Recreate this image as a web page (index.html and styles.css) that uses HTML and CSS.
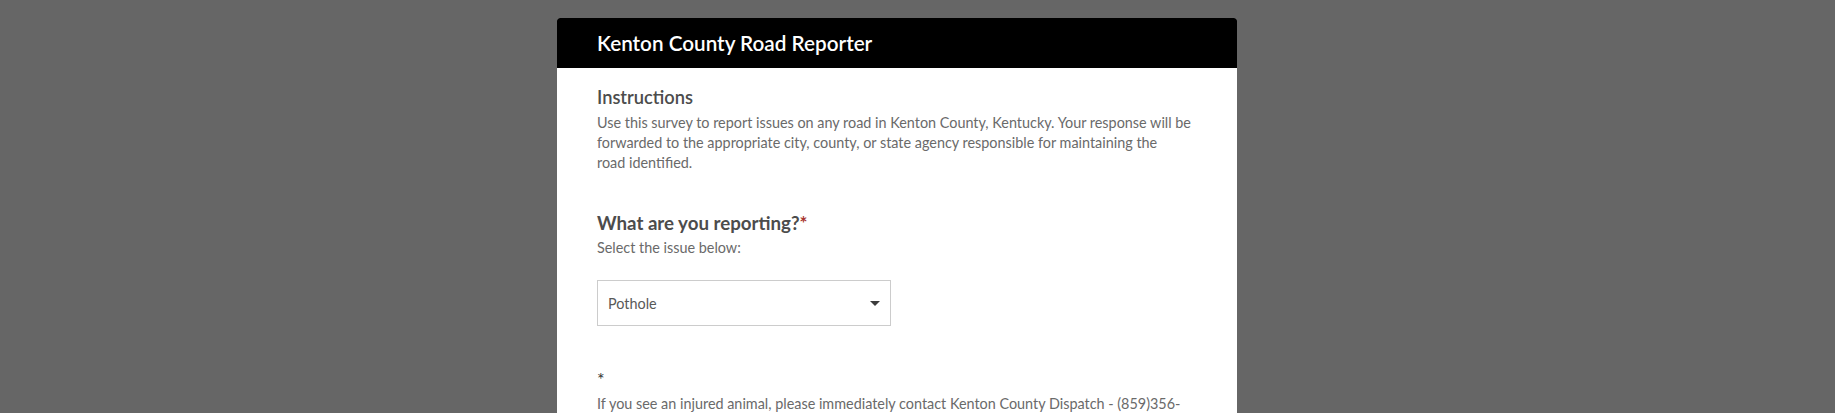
FILE: index.html
```html
<!DOCTYPE html>
<html>
<head>
<meta charset="utf-8">
<link rel="stylesheet" href="styles.css">
</head>
<body>
<div class="card">
  <div class="header"><h1 class="title">Kenton County Road Reporter</h1></div>
  <div class="content">
    <section class="instructions">
      <h2 class="instr-title">Instructions</h2>
      <p class="instr-text">Use this survey to report issues on any road in Kenton County, Kentucky. Your response will be forwarded to the appropriate city, county, or state agency responsible for maintaining the road&nbsp;identified.</p>
    </section>
    <section class="question">
      <h3 class="q-title">What are you reporting?<span class="req">*</span></h3>
      <p class="q-desc">Select the issue below:</p>
      <div class="select">
        <span class="select-value">Pothole</span>
        <span class="caret"></span>
      </div>
    </section>
    <section class="note">
      <div class="note-star">*</div>
      <p class="note-text">If you see an injured animal, please immediately contact Kenton County Dispatch - (859)356-3191.</p>
    </section>
  </div>
</div>
</body>
</html>
```
FILE: styles.css
```css
html, body {
  margin: 0;
  padding: 0;
  background: #666666;
  font-family: Lato, "Open Sans", sans-serif;
  height: 100%;
  overflow: hidden;
}
.card {
  width: 680px;
  margin: 18px 0 0 557px;
  background: #ffffff;
  border-radius: 3px 3px 0 0;
  min-height: 500px;
}
.header {
  height: 50px;
  background: #000;
  border-radius: 3px 3px 0 0;
  padding: 0 40px;
  display: flex;
  align-items: center;
}
.title {
  margin: 0;
  color: #fff;
  font-size: 20.7px;
  font-weight: 600;
}
.content {
  padding: 17px 40px 0 40px;
}
.instr-title {
  margin: 0;
  font-size: 18.3px;
  font-weight: 600;
  color: #4c4c4c;
  line-height: 24px;
}
.instr-text {
  margin: 4px 0 0 0;
  font-size: 14.4px;
  line-height: 20px;
  color: #6a6a6a;
  width: 600px;
}
.question {
  margin-top: 37px;
}
.q-title {
  margin: 0;
  font-size: 18.7px;
  font-weight: 700;
  color: #4c4c4c;
  line-height: 26px;
}
.req {
  color: #a8342e;
}
.q-desc {
  margin: 2px 0 0 0;
  font-size: 14.4px;
  line-height: 20px;
  color: #6a6a6a;
}
.select {
  margin-top: 22px;
  height: 44px;
  border: 1px solid #cccccc;
  display: flex;
  align-items: center;
  justify-content: space-between;
  padding: 0 10px 0 10px;
  width: 272px;
}
.select-value {
  font-size: 14.4px;
  color: #595959;
}
.caret {
  width: 0;
  height: 0;
  border-left: 5px solid transparent;
  border-right: 5px solid transparent;
  border-top: 5px solid #3c3c3c;
}
.note {
  margin-top: 43px;
}
.note-star {
  font-size: 18px;
  color: #333;
  line-height: 20px;
}
.note-text {
  margin: 5px 0 0 0;
  font-size: 14.4px;
  line-height: 20px;
  color: #6a6a6a;
  width: 600px;
}
```
